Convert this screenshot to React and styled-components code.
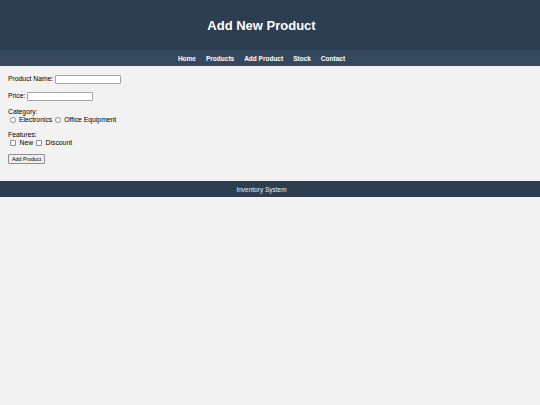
import React from 'react';
import styled, {createGlobalStyle} from 'styled-components';

const GlobalStyle = createGlobalStyle`
    html, body {
        margin: 0;
        padding: 0;
        background: #f2f2f2;
        font-family: 'Liberation Sans', Arial, sans-serif;
    }
`;

const Header = styled.header`
    height: 50px;
    padding-right: 17px;
    background: #2c3e50;

    display: flex;
    justify-content: center;
    align-items: center;
`;

const Title = styled.h1`
    margin: 0;
    font-size: 13px;
    font-weight: bold;
    color: #ffffff;
`;

const Nav = styled.nav`
    height: 16px;
    padding-right: 17px;
    background: #34495e;

    display: flex;
    justify-content: center;
    align-items: center;
`;

const NavLink = styled.a`
    margin: 0 5px;
    font-size: 6.5px;
    font-weight: bold;
    color: #ffffff;
    text-decoration: none;
`;

const Main = styled.main`
    padding: 8px 8px 10px;
    font-size: 6.8px;
    color: #000;
`;

const Group = styled.div`
    margin-bottom: 7px;
    line-height: 8px;
`;

const Row = styled.div`
    display: flex;
    align-items: center;
    height: ${props => props.$h || 8}px;
`;

const TextInput = styled.input`
    box-sizing: border-box;
    width: 66px;
    height: 9px;
    margin: 0 0 0 2px;
    padding: 0;
    border: 1px solid #a3a3a3;
    border-radius: 1px;
    background: #fff;
    font-size: 6px;
`;

const Choice = styled.input`
    appearance: none;
    box-sizing: border-box;
    width: ${props => props.type === 'radio' ? 5.5 : 6}px;
    height: ${props => props.type === 'radio' ? 5.5 : 6}px;
    margin: 0 3.5px 0 ${props => props.$first ? 2 : 3}px;
    border: 0.6px solid #8a8a8a;
    border-radius: ${props => props.type === 'radio' ? '50%' : '1px'};
    background: #fff;
`;

const Button = styled.button`
    box-sizing: border-box;
    height: 10px;
    padding: 0 3px;
    border: 0.6px solid #8f8f8f;
    border-radius: 1px;
    background: #efefef;
    font-family: 'Liberation Sans', Arial, sans-serif;
    font-size: 5.3px;
    color: #000;
`;

const Footer = styled.footer`
    height: 16px;
    padding-right: 17px;
    background: #2c3e50;

    display: flex;
    justify-content: center;
    align-items: center;

    font-size: 6.5px;
    color: #ecf0f1;
`;

function App(){
    return(<>
        <GlobalStyle/>
        <Header>
            <Title>Add New Product</Title>
        </Header>
        <Nav>
            <NavLink href="#">Home</NavLink>
            <NavLink href="#">Products</NavLink>
            <NavLink href="#">Add Product</NavLink>
            <NavLink href="#">Stock</NavLink>
            <NavLink href="#">Contact</NavLink>
        </Nav>
        <Main>
            <form onSubmit={e => e.preventDefault()}>
                <Group>
                    <Row $h={10}>Product Name: <TextInput type="text"/></Row>
                </Group>
                <Group>
                    <Row $h={10}>Price: <TextInput type="text"/></Row>
                </Group>
                <Group>
                    <Row>Category:</Row>
                    <Row>
                        <Choice type="radio" name="category" $first/>Electronics
                        <Choice type="radio" name="category"/>Office Equipment
                    </Row>
                </Group>
                <Group>
                    <Row>Features:</Row>
                    <Row>
                        <Choice type="checkbox" $first/>New
                        <Choice type="checkbox"/>Discount
                    </Row>
                </Group>
                <Group>
                    <Button type="submit">Add Product</Button>
                </Group>
            </form>
        </Main>
        <Footer>Inventory System</Footer>
    </>);
}

export default App;
